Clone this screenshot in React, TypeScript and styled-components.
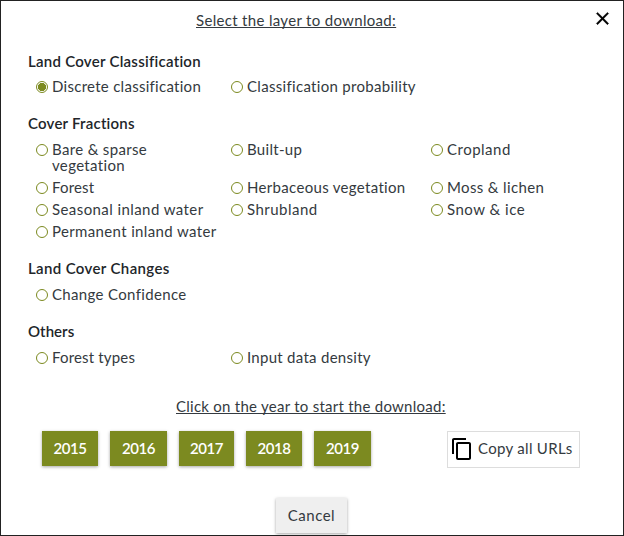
import React, { useState } from 'react';
import styled, { createGlobalStyle } from 'styled-components';

const GlobalStyle = createGlobalStyle`
  *, *::before, *::after { box-sizing: border-box; }
  body { margin: 0; background: #fff; }
`;

const Dialog = styled.div`
  position: relative;
  display: flex;
  flex-direction: column;
  width: 624px;
  height: 536px;
  border: 1px solid #222;
  background: #fff;
  color: #343a40;
  font: 400 15px/16px Lato, sans-serif;
  overflow: hidden;
`;

const Title = styled.h2<{ $top: number; $left: number; $spacing: number }>`
  margin: ${p => p.$top}px 0 0 ${p => p.$left}px;
  font: inherit;
  letter-spacing: ${p => p.$spacing}px;
  white-space: nowrap;
  text-decoration: underline;
  text-decoration-thickness: 1px;
  text-underline-offset: 1px;
  text-decoration-skip-ink: none;
`;

const CloseButton = styled.button`
  position: absolute;
  top: 7px;
  right: 10px;
  display: flex;
  padding: 0;
  border: 0;
  background: none;
  color: #000;
`;

const Section = styled.section<{ $top: number }>`
  margin: ${p => p.$top}px 0 0 27px;
`;

const Heading = styled.h3<{ $gap: number; $spacing: number }>`
  margin: 0 0 ${p => p.$gap}px;
  color: #212529;
  font: inherit;
  font-weight: 600;
  letter-spacing: ${p => p.$spacing}px;
`;

const Options = styled.div`
  display: grid;
  grid-template-columns: 195px 200px 180px;
  row-gap: 6px;
  margin-left: 8px;
`;

const Option = styled.label<{ $spacing: number }>`
  display: flex;
  align-items: flex-start;
  gap: 4px;
  letter-spacing: ${p => p.$spacing}px;
  white-space: pre-line;
`;

const Radio = styled.input`
  appearance: none;
  flex: none;
  width: 12px;
  height: 12px;
  margin: 3px 0 0;
  border: 1px solid #7c8a20;
  border-radius: 50%;
  background: #fff;
  &:checked {
    background: radial-gradient(circle, #7c8a20 3.8px, #fff 4.4px);
  }
`;

const Downloads = styled.div`
  display: flex;
  align-items: flex-start;
  gap: 12px;
  margin: 17px 0 0 41px;
`;

const YearButton = styled.button<{ $width: number }>`
  width: ${p => p.$width}px;
  height: 35px;
  padding: 0 0 2px;
  border: 0;
  background: #7c8a20;
  box-shadow: 0 1px 3px rgba(0, 0, 0, 0.35);
  color: #fff;
  font: 600 15px/16px Lato, sans-serif;
  letter-spacing: -0.5px;
`;

const CopyButton = styled.button`
  display: flex;
  align-items: center;
  gap: 4px;
  width: 133px;
  height: 37px;
  margin-left: 64px;
  padding: 0 0 1px 2px;
  border: 1px solid #ddd;
  background: #fff;
  color: #343a40;
  font: 400 15px/16px Lato, sans-serif;
  letter-spacing: 0.3px;
  white-space: nowrap;
`;

const CopyLabel = styled.span`
  padding-bottom: 2px;
`;

const CancelButton = styled.button`
  align-self: flex-start;
  width: 71px;
  height: 35px;
  margin: 30px 0 0 275px;
  padding: 0 0 2px;
  border: 0;
  background: #efefef;
  box-shadow: 0 1px 3px rgba(0, 0, 0, 0.35);
  color: #343a40;
  font: 400 15px/16px Lato, sans-serif;
  letter-spacing: 0.5px;
`;

interface Layer { name: string; spacing: number }
interface Group { title: string; spacing: number; top: number; gap: number; layers: Layer[] }

const groups: Group[] = [
  {
    title: 'Land Cover Classification', spacing: 0.26, top: 25, gap: 9,
    layers: [
      { name: 'Discrete classification', spacing: 0.28 },
      { name: 'Classification probability', spacing: 0.31 },
    ],
  },
  {
    title: 'Cover Fractions', spacing: 0.22, top: 21, gap: 10,
    layers: [
      { name: 'Bare & sparse\nvegetation', spacing: 0.34 },
      { name: 'Built-up', spacing: 0.3 },
      { name: 'Cropland', spacing: 0.5 },
      { name: 'Forest', spacing: 0.15 },
      { name: 'Herbaceous vegetation', spacing: 0.32 },
      { name: 'Moss & lichen', spacing: 0.36 },
      { name: 'Seasonal inland water', spacing: 0.42 },
      { name: 'Shrubland', spacing: 0.48 },
      { name: 'Snow & ice', spacing: 0.5 },
      { name: 'Permanent inland water', spacing: 0.36 },
    ],
  },
  {
    title: 'Land Cover Changes', spacing: 0.36, top: 21, gap: 10,
    layers: [{ name: 'Change Confidence', spacing: 0.34 }],
  },
  {
    title: 'Others', spacing: 0.05, top: 21, gap: 10,
    layers: [
      { name: 'Forest types', spacing: 0.17 },
      { name: 'Input data density', spacing: 0.28 },
    ],
  },
];

const years = [
  { year: 2015, width: 56 },
  { year: 2016, width: 57 },
  { year: 2017, width: 55 },
  { year: 2018, width: 56 },
  { year: 2019, width: 57 },
];

export default function App() {
  const [selected, setSelected] = useState('Discrete classification');
  return (
    <>
      <GlobalStyle />
      <Dialog role="dialog">
        <CloseButton aria-label="Close">
          <svg width="21" height="21" viewBox="0 0 24 24" fill="currentColor" stroke="currentColor" strokeWidth="0.5">
            <path d="M19 6.41 17.59 5 12 10.59 6.41 5 5 6.41 10.59 12 5 17.59 6.41 19 12 13.41 17.59 19 19 17.59 13.41 12z" />
          </svg>
        </CloseButton>
        <Title $top={11} $left={195} $spacing={0.32}>Select the layer to download:</Title>
        {groups.map(group => (
          <Section key={group.title} $top={group.top}>
            <Heading $gap={group.gap} $spacing={group.spacing}>{group.title}</Heading>
            <Options>
              {group.layers.map(layer => (
                <Option key={layer.name} $spacing={layer.spacing}>
                  <Radio
                    type="radio"
                    name="layer"
                    checked={selected === layer.name}
                    onChange={() => setSelected(layer.name)}
                  />
                  {layer.name}
                </Option>
              ))}
            </Options>
          </Section>
        ))}
        <Title $top={33} $left={175} $spacing={0.26}>Click on the year to start the download:</Title>
        <Downloads>
          {years.map(({ year, width }) => (
            <YearButton key={year} $width={width}>{year}</YearButton>
          ))}
          <CopyButton>
            <svg width="24" height="24" viewBox="0 0 24 24" fill="#000">
              <path d="M16 1H4c-1.1 0-2 .9-2 2v14h2V3h12V1zm3 4H8c-1.1 0-2 .9-2 2v14c0 1.1.9 2 2 2h11c1.1 0 2-.9 2-2V7c0-1.1-.9-2-2-2zm0 16H8V7h11v14z" />
            </svg>
            <CopyLabel>Copy all URLs</CopyLabel>
          </CopyButton>
        </Downloads>
        <CancelButton>Cancel</CancelButton>
      </Dialog>
    </>
  );
}
